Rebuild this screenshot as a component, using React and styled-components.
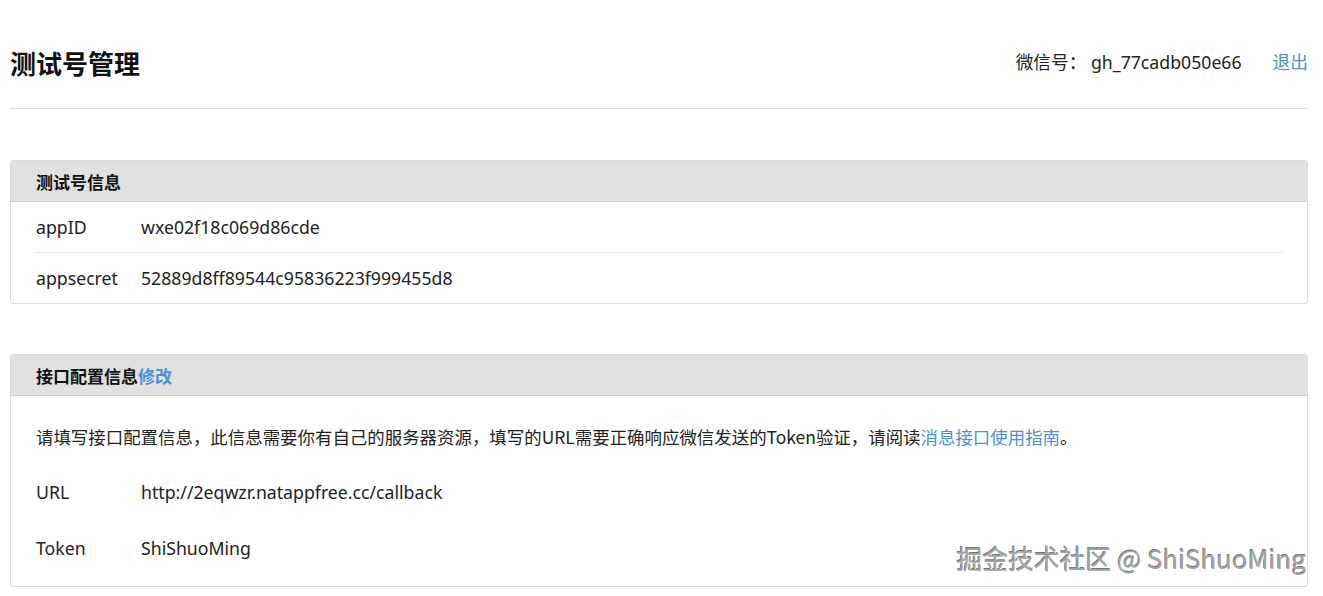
import React from "react";
import styled, {createGlobalStyle} from "styled-components";

const GlobalStyle = createGlobalStyle`
  body {
    margin: 0;
    background: #ffffff;
    color: #222222;
    font-family: "Segoe UI", "Noto Sans", "Noto Sans CJK SC", sans-serif;
    font-size: 17.7px;
  }
`;

const Page = styled.div`
  position: relative;
  min-height: 596px;
  padding: 0 15px 0 10px;
  box-sizing: border-box;
  overflow: hidden;
`;

const TopBar = styled.div`
  display: flex;
  align-items: center;
  justify-content: space-between;
  height: 90px;
  padding-top: 18px;
  border-bottom: 1px solid #dddddd;
`;

const Title = styled.h1`
  margin: 0 0 2px;
  font-size: 26px;
  font-weight: 700;
  font-family: "Noto Sans CJK SC", sans-serif;
  color: #111111;
`;

const Account = styled.div`
  display: flex;
  align-items: center;
  gap: 31px;
  margin-bottom: 4px;
  color: #222222;
`;

const Link = styled.a`
  color: #4a90d9;
  text-decoration: none;
  font-weight: ${(p) => (p.$bold ? 700 : 400)};
  cursor: pointer;
`;

const Panel = styled.section`
  margin-top: ${(p) => p.$gap}px;
  border: 1px solid #dcdcdc;
  border-radius: 3px;
  overflow: hidden;
`;

const PanelHead = styled.div`
  display: flex;
  align-items: center;
  height: 40px;
  padding: 0 25px;
  background: #e1e1e1;
  border-bottom: 1px solid #d0d0d0;
  font-size: 17px;
  font-weight: 700;
  font-family: "Noto Sans CJK SC", sans-serif;
  color: #111111;
`;

const PanelBody = styled.div`
  padding: ${(p) => (p.$loose ? "12px 25px 10px" : "0 25px")};
`;

const Row = styled.div`
  display: flex;
  align-items: center;
  height: ${(p) => p.$h}px;
  border-bottom: ${(p) => (p.$line ? "1px solid #e6e6e6" : "none")};
`;

const Label = styled.span`
  width: 105px;
  flex-shrink: 0;
`;

const Note = styled.p`
  margin: 0;
  font-family: "Noto Sans CJK SC", sans-serif;
  font-size: 17.45px;
`;

// embossed site mark in the lower right corner
const Watermark = styled.div`
  position: absolute;
  right: 17px;
  bottom: 20px;
  font-family: "Noto Sans CJK SC", sans-serif;
  font-size: 25.8px;
  font-weight: 400;
  color: #a2a2a2;
  text-shadow: 1px 1px 0 #ffffff, -0.6px -0.6px 0 #777777;
`;

const appInfo = [
  {label: "appID", value: "wxe02f18c069d86cde"},
  {label: "appsecret", value: "52889d8ff89544c95836223f999455d8"},
];

const App = () => (
  <Page>
    <GlobalStyle/>
    <TopBar>
      <Title>测试号管理</Title>
      <Account>
        <span>微信号：&nbsp;gh_77cadb050e66</span>
        <Link>退出</Link>
      </Account>
    </TopBar>

    <Panel $gap={51}>
      <PanelHead>测试号信息</PanelHead>
      <PanelBody>
        {appInfo.map((item, i) => (
          <Row key={item.label} $h={50} $line={i < appInfo.length - 1}>
            <Label>{item.label}</Label>
            <span>{item.value}</span>
          </Row>
        ))}
      </PanelBody>
    </Panel>

    <Panel $gap={50}>
      <PanelHead>
        接口配置信息<Link $bold>修改</Link>
      </PanelHead>
      <PanelBody $loose>
        <Row $h={56}>
          <Note>
            请填写接口配置信息，此信息需要你有自己的服务器资源，填写的URL需要正确响应微信发送的Token验证，请阅读
            <Link>消息接口使用指南</Link>。
          </Note>
        </Row>
        <Row $h={56}>
          <Label>URL</Label>
          <span>http://2eqwzr.natappfree.cc/callback</span>
        </Row>
        <Row $h={56}>
          <Label>Token</Label>
          <span>ShiShuoMing</span>
        </Row>
      </PanelBody>
    </Panel>

    <Watermark>掘金技术社区 @ ShiShuoMing</Watermark>
  </Page>
);

export default App;
